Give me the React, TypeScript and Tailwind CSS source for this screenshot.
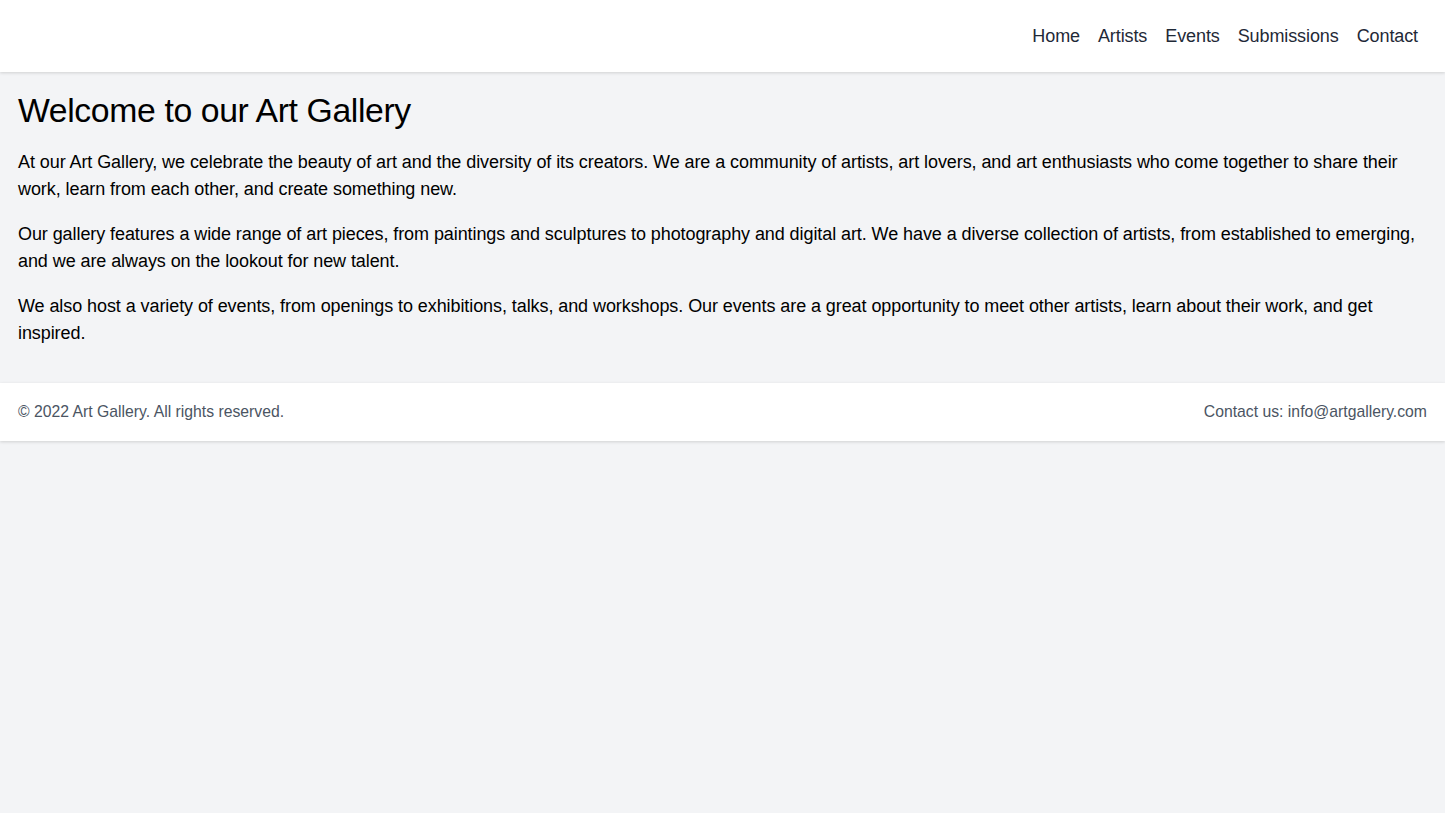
export default function App() {
  const links = ["Home", "Artists", "Events", "Submissions", "Contact"];

  return (
    <div className="min-h-[813px] bg-[#f3f4f6] font-['Liberation_Sans',Arial,sans-serif] text-[18px] leading-[27px] text-black">
      {/* header */}
      <header className="relative bg-white shadow-[0_1px_3px_rgba(0,0,0,0.15)]">
        <div className="flex h-[72px] items-center justify-end px-[27px]">
          <nav className="flex items-center gap-[18px] tracking-[-0.1px] text-[#1f2937]">
            {links.map((l) => (
              <a key={l} href="#" className="hover:text-black">
                {l}
              </a>
            ))}
          </nav>
        </div>
      </header>

      {/* main */}
      <main className="p-[18px] tracking-[-0.08px]">
        <h1 className="mb-[18px] text-[33.75px] leading-[40.5px] tracking-[-0.38px]">Welcome to our Art Gallery</h1>
        <p className="mb-[18px]">
          At our Art Gallery, we celebrate the beauty of art and the diversity of its creators. We are a
          community of artists, art lovers, and art enthusiasts who come together to share their work, learn
          from each other, and create something new.
        </p>
        <p className="mb-[18px]">
          Our gallery features a wide range of art pieces, from paintings and sculptures to photography and
          digital art. We have a diverse collection of artists, from established to emerging, and we are always
          on the lookout for new talent.
        </p>
        <p className="mb-[18px]">
          We also host a variety of events, from openings to exhibitions, talks, and workshops. Our events are a
          great opportunity to meet other artists, learn about their work, and get inspired.
        </p>
      </main>

      {/* footer */}
      <footer className="bg-white shadow-[0_1px_3px_rgba(0,0,0,0.15)]">
        <div className="flex items-center justify-between p-[18px] text-[15.75px] leading-[22.5px] text-[#4b5563]">
          <span>© 2022 Art Gallery. All rights reserved.</span>
          <span>Contact us: info@artgallery.com</span>
        </div>
      </footer>
    </div>
  );
}
